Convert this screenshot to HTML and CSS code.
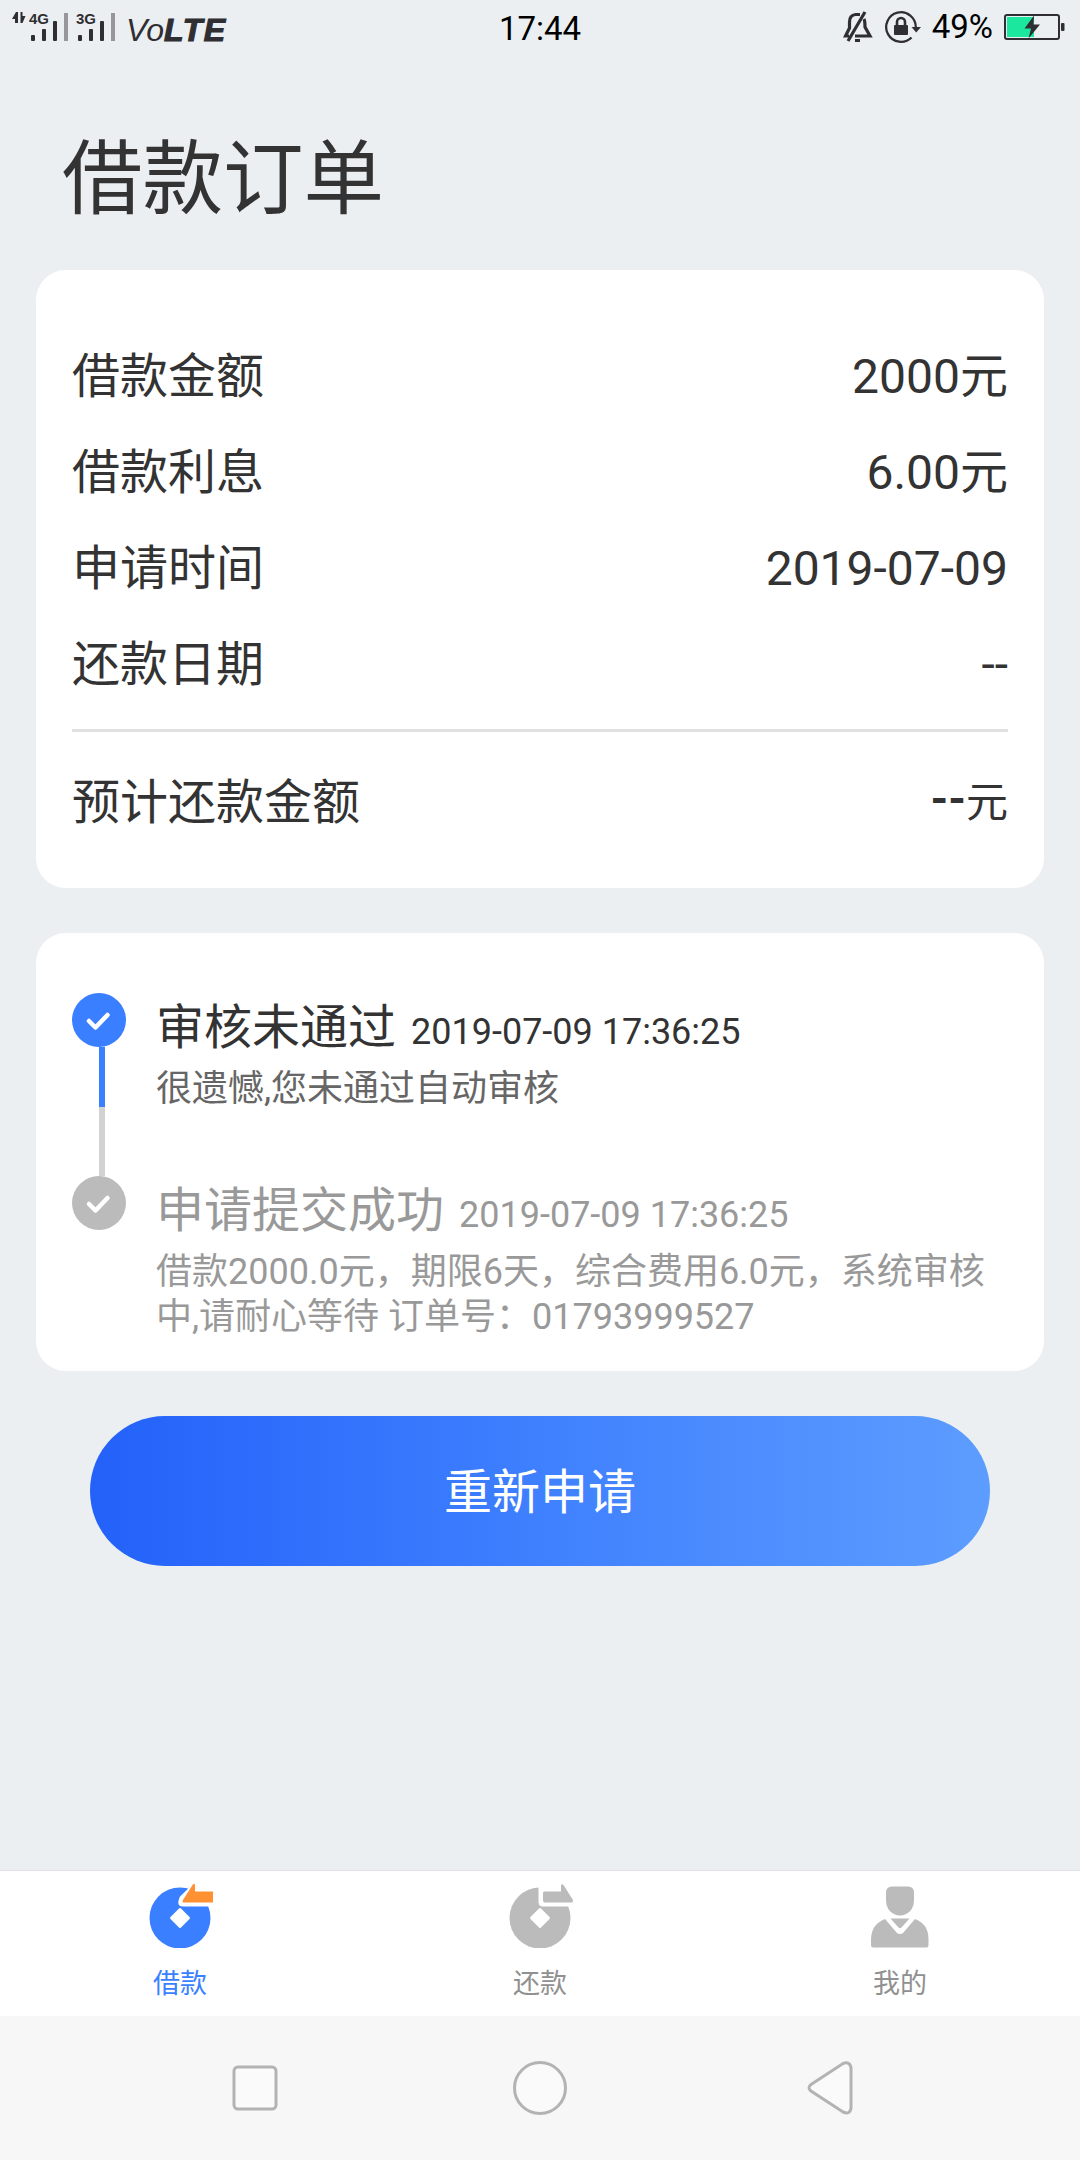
FILE: index.html
```html
<!DOCTYPE html>
<html lang="zh-CN">
<head>
    <meta charset="UTF-8">
    <meta name="viewport" content="width=device-width, initial-scale=1.0">
    <title>借款订单</title>
    <link rel="stylesheet" href="styles.css">
</head>
<body>
    <div class="status-bar">
        <svg class="signals" width="240" height="56" viewBox="0 0 240 56">
            <path d="M18 12v11h-3v-4h-3l4-7zM20.500 12h2v4h3l-3 7h-2z" fill="#2f2e33"/>
            <g class="net-label">
                <text x="29" y="24">4G</text>
                <text x="76" y="24">3G</text>
            </g>
            <g fill="#2f2e33">
                <rect x="31" y="35" width="4" height="6" rx="1"/>
                <rect x="42" y="29" width="4" height="12" rx="1"/>
                <rect x="53" y="21" width="4" height="20" rx="1"/>
                <rect x="78" y="35" width="4" height="6" rx="1"/>
                <rect x="89" y="29" width="4" height="12" rx="1"/>
                <rect x="100" y="21" width="4" height="20" rx="1"/>
            </g>
            <rect x="64" y="13" width="4" height="28" fill="#97969b"/>
            <rect x="111" y="13" width="4" height="28" fill="#97969b"/>
            <text class="volte" x="126" y="41">Vo<tspan class="volte-bold">LTE</tspan></text>
        </svg>
        <div class="time">17:44</div>
        <div class="status-right">
            <svg class="bell" width="30" height="32" viewBox="0 0 30 32" fill="none" stroke="#2f2e33" stroke-width="3.200">
                <path d="M17 3.500h-4.500C8 4 6.500 7 6.500 11v6L2.500 25H6M21 8c1 2 1 4 1 8l5 9H12"/>
                <path d="M22 1L5 30"/>
                <path d="M12 29.500h5" stroke-width="3"/>
            </svg>
            <svg class="lock" width="38" height="34" viewBox="0 0 38 34">
                <path d="M28.500 27.500A14.800 14.800 0 1 1 32.800 17.500" fill="none" stroke="#2f2e33" stroke-width="2.300"/>
                <path d="M28.500 17h9.500l-4.800 5.500z" fill="#2f2e33"/>
                <rect x="11" y="15" width="14" height="10" rx="1" fill="#2f2e33"/>
                <path d="M14 15v-3a4 4 0 0 1 8 0v3" fill="none" stroke="#2f2e33" stroke-width="2.600"/>
            </svg>
            <span class="percent">49%</span>
            <svg class="battery" width="62" height="30" viewBox="0 0 62 30">
                <rect x="1" y="3" width="54" height="24" rx="2" fill="none" stroke="#2f2e33" stroke-width="2"/>
                <rect x="57" y="11" width="3.500" height="8" rx="1" fill="#2f2e33"/>
                <rect x="3" y="5" width="27" height="20" fill="#1be79f"/>
                <path d="M30 3.500L20.500 16.500h6.500l-2.500 10L36 12.500h-6.500z" fill="#2f2e33"/>
            </svg>
        </div>
    </div>

    <h1 class="page-title">借款订单</h1>

    <div class="card order">
        <div class="row"><span>借款金额</span><span>2000元</span></div>
        <div class="row"><span>借款利息</span><span>6.00元</span></div>
        <div class="row"><span>申请时间</span><span>2019-07-09</span></div>
        <div class="row"><span>还款日期</span><span>--</span></div>
        <div class="row total">
            <span>预计还款金额</span>
            <span class="total-value"><b>--</b>元</span>
        </div>
    </div>

    <div class="card progress">
        <div class="step active">
            <div class="rail">
                <svg class="dot" width="54" height="54" viewBox="0 0 54 54">
                    <circle cx="27" cy="27" r="27"/>
                    <path d="M17 28l6.500 6.500L35.500 22"/>
                </svg>
                <div class="line"></div>
            </div>
            <div class="step-body">
                <div class="step-title">审核未通过<span class="step-date">2019-07-09 17:36:25</span></div>
                <div class="step-desc">很遗憾,您未通过自动审核</div>
            </div>
        </div>
        <div class="step">
            <div class="rail">
                <svg class="dot" width="54" height="54" viewBox="0 0 54 54">
                    <circle cx="27" cy="27" r="27"/>
                    <path d="M17 28l6.500 6.500L35.500 22"/>
                </svg>
            </div>
            <div class="step-body">
                <div class="step-title">申请提交成功<span class="step-date">2019-07-09 17:36:25</span></div>
                <div class="step-desc">借款2000.0元，期限6天，综合费用6.0元，系统审核中,请耐心等待 订单号：01793999527</div>
            </div>
        </div>
    </div>

    <button class="apply-btn">重新申请</button>

    <div class="tab-bar">
        <div class="tab selected">
            <svg width="66" height="66" viewBox="0 0 66 66">
                <circle cx="33" cy="36" r="30.500" fill="#3a7fff"/>
                <path d="M45 3L33 14.500Q28.500 24.500 36 24.500H66V0H47z" fill="#fff"/>
                <path d="M34 26.500l8.500 8.500q1 1 0 2L34 45.500q-1 1-2 0L23.500 37q-1-1 0-2L32 26.500q1-1 2 0z" fill="#fff"/>
                <path d="M36 18L45.500 3Q48 0 48 4v5.500H66v11H37q-2.500 0-1-2.500z" fill="#ff9133"/>
            </svg>
            <span>借款</span>
        </div>
        <div class="tab">
            <svg width="66" height="66" viewBox="0 0 66 66">
                <circle cx="33" cy="36" r="30.500" fill="#bbb"/>
                <path d="M31.500 5v15q0 4.500 4.500 4.500H66V0H36z" fill="#fff"/>
                <path d="M34 26.500l8.500 8.500q1 1 0 2L34 45.500q-1 1-2 0L23.500 37q-1-1 0-2L32 26.500q1-1 2 0z" fill="#fff"/>
                <path d="M37.500 9.500H54V4q0-3 2.500-1L66 18q0 2.500-1 2.500H38q-2 0-2-2V11q0-1.500 1.500-1.500z" fill="#bbb"/>
            </svg>
            <span>还款</span>
        </div>
        <div class="tab">
            <svg width="66" height="66" viewBox="0 0 66 66" fill="#bbb">
                <path d="M24 4.500h18q5 1 5 6V18q0 10-8 14-6 3-12 0-8-4-8-14v-7.500q0-5 5-6z"/>
                <path d="M18 37l11.500 13.500q3.500 3 7 0L48 37q13.500 5 13.500 20v6q0 2.500-2 2.500h-53q-2.500 0-2.500-2.500v-6Q4.500 42 18 37z"/>
                <path d="M23.500 36.500h19L34.500 45.500q-1.500 1.500-3 0z"/>
            </svg>
            <span>我的</span>
        </div>
    </div>

    <div class="nav-bar">
        <svg width="46" height="46" viewBox="0 0 46 46"><rect x="2" y="2" width="42" height="42" rx="4"/></svg>
        <svg class="home" width="56" height="56" viewBox="0 0 56 56"><circle cx="28" cy="28" r="25.500"/></svg>
        <svg width="48" height="56" viewBox="0 0 48 56"><path d="M5 24.500L37 3.500Q44 1 45 8V48Q44 55 37 52L5 31Q1 27.500 5 24.500z"/></svg>
    </div>
</body>
</html>
```

FILE: styles.css
```css
* {
    margin: 0;
    padding: 0;
    box-sizing: border-box;
}

body {
    display: flex;
    flex-direction: column;
    width: 1080px;
    height: 2160px;
    background: #ebeff2;
    color: #333;
    font-family: Roboto, "Noto Sans CJK SC", sans-serif;
    font-size: 48px;
}

.status-bar {
    display: grid;
    grid-template-columns: 1fr auto 1fr;
    height: 56px;
    align-items: center;
    color: #000;
    font-size: 33px;
    line-height: 54px;
}

.time {
    padding-top: 2px;
}

.net-label {
    font: bold 15px "Liberation Sans", sans-serif;
    fill: #2f2e33;
}

.volte {
    font: italic 32px "Liberation Sans", sans-serif;
    fill: #2f2e33;
}

.volte-bold {
    font-weight: bold;
    letter-spacing: 1.5px;
    stroke: #2f2e33;
    stroke-width: 1.2px;
}

.status-right {
    display: flex;
    justify-content: flex-end;
    align-items: center;
    height: 56px;
    padding: 0 14px 2px 0;
}

.lock {
    margin-left: 10px;
}

.percent {
    margin: 0 11px;
}

.page-title {
    height: 214px;
    padding: 64px 0 0 62px;
    font-size: 80.5px;
    font-weight: 400;
    line-height: 120px;
}

.card {
    margin: 0 36px;
    padding: 0 36px;
    border-radius: 30px;
    background: #fff;
}

.order {
    height: 618px;
    padding-top: 57px;
}

.row {
    display: flex;
    justify-content: space-between;
    height: 96px;
    line-height: 100px;
}

.total {
    height: 138px;
    margin-top: 18px;
    border-top: 3px solid #e0e0e0;
    line-height: 142px;
}

.total-value {
    font-size: 42px;
}

.total-value b {
    font-size: 45px;
    line-height: 1;
    vertical-align: 3px;
}

.progress {
    height: 438px;
    margin-top: 45px;
    padding-top: 60px;
}

.step {
    display: flex;
    gap: 30px;
    color: #999;
}

.step.active {
    height: 183px;
    color: #333;
}

.rail {
    display: flex;
    flex-direction: column;
    flex-shrink: 0;
    width: 54px;
}

.dot circle {
    fill: #bbb;
}

.active .dot circle {
    fill: #3a7fff;
}

.dot path {
    fill: none;
    stroke: #fff;
    stroke-width: 4.5;
    stroke-linecap: round;
    stroke-linejoin: round;
}

.line {
    flex: 1;
    width: 6px;
    margin-left: 27px;
    background: linear-gradient(#3a7fff 60px, #d2d2d2 60px);
}

.step-title {
    height: 74px;
    line-height: 70px;
}

.step-date {
    margin-left: 15px;
    font-size: 36px;
}

.step-desc {
    font-size: 36px;
    line-height: 45px;
}

.active .step-desc {
    color: #666;
}

.apply-btn {
    height: 150px;
    margin: 45px 90px 0;
    padding-bottom: 6px;
    border: none;
    border-radius: 75px;
    background: linear-gradient(to right, #2361f9, #3c7dfe 45%, #5d9dff);
    color: #fff;
    font: inherit;
}

.tab-bar {
    display: flex;
    height: 146px;
    margin-top: auto;
    border-top: 1px solid #e0e0e6;
    background: #fff;
}

.tab {
    display: flex;
    flex: 1;
    flex-direction: column;
    align-items: center;
    padding-top: 11px;
    color: #909090;
    font-size: 27px;
}

.tab span {
    margin-top: 16px;
    line-height: 40px;
}

.tab.selected {
    color: #3a7fff;
}

.nav-bar {
    display: flex;
    justify-content: space-between;
    align-items: center;
    height: 144px;
    padding: 0 226px 0 232px;
    background: #f7f7f7;
}

.nav-bar svg {
    fill: #fafafa;
    stroke: #b3b3b3;
    stroke-width: 3;
}

.nav-bar .home {
    margin-right: 4px;
}
```
